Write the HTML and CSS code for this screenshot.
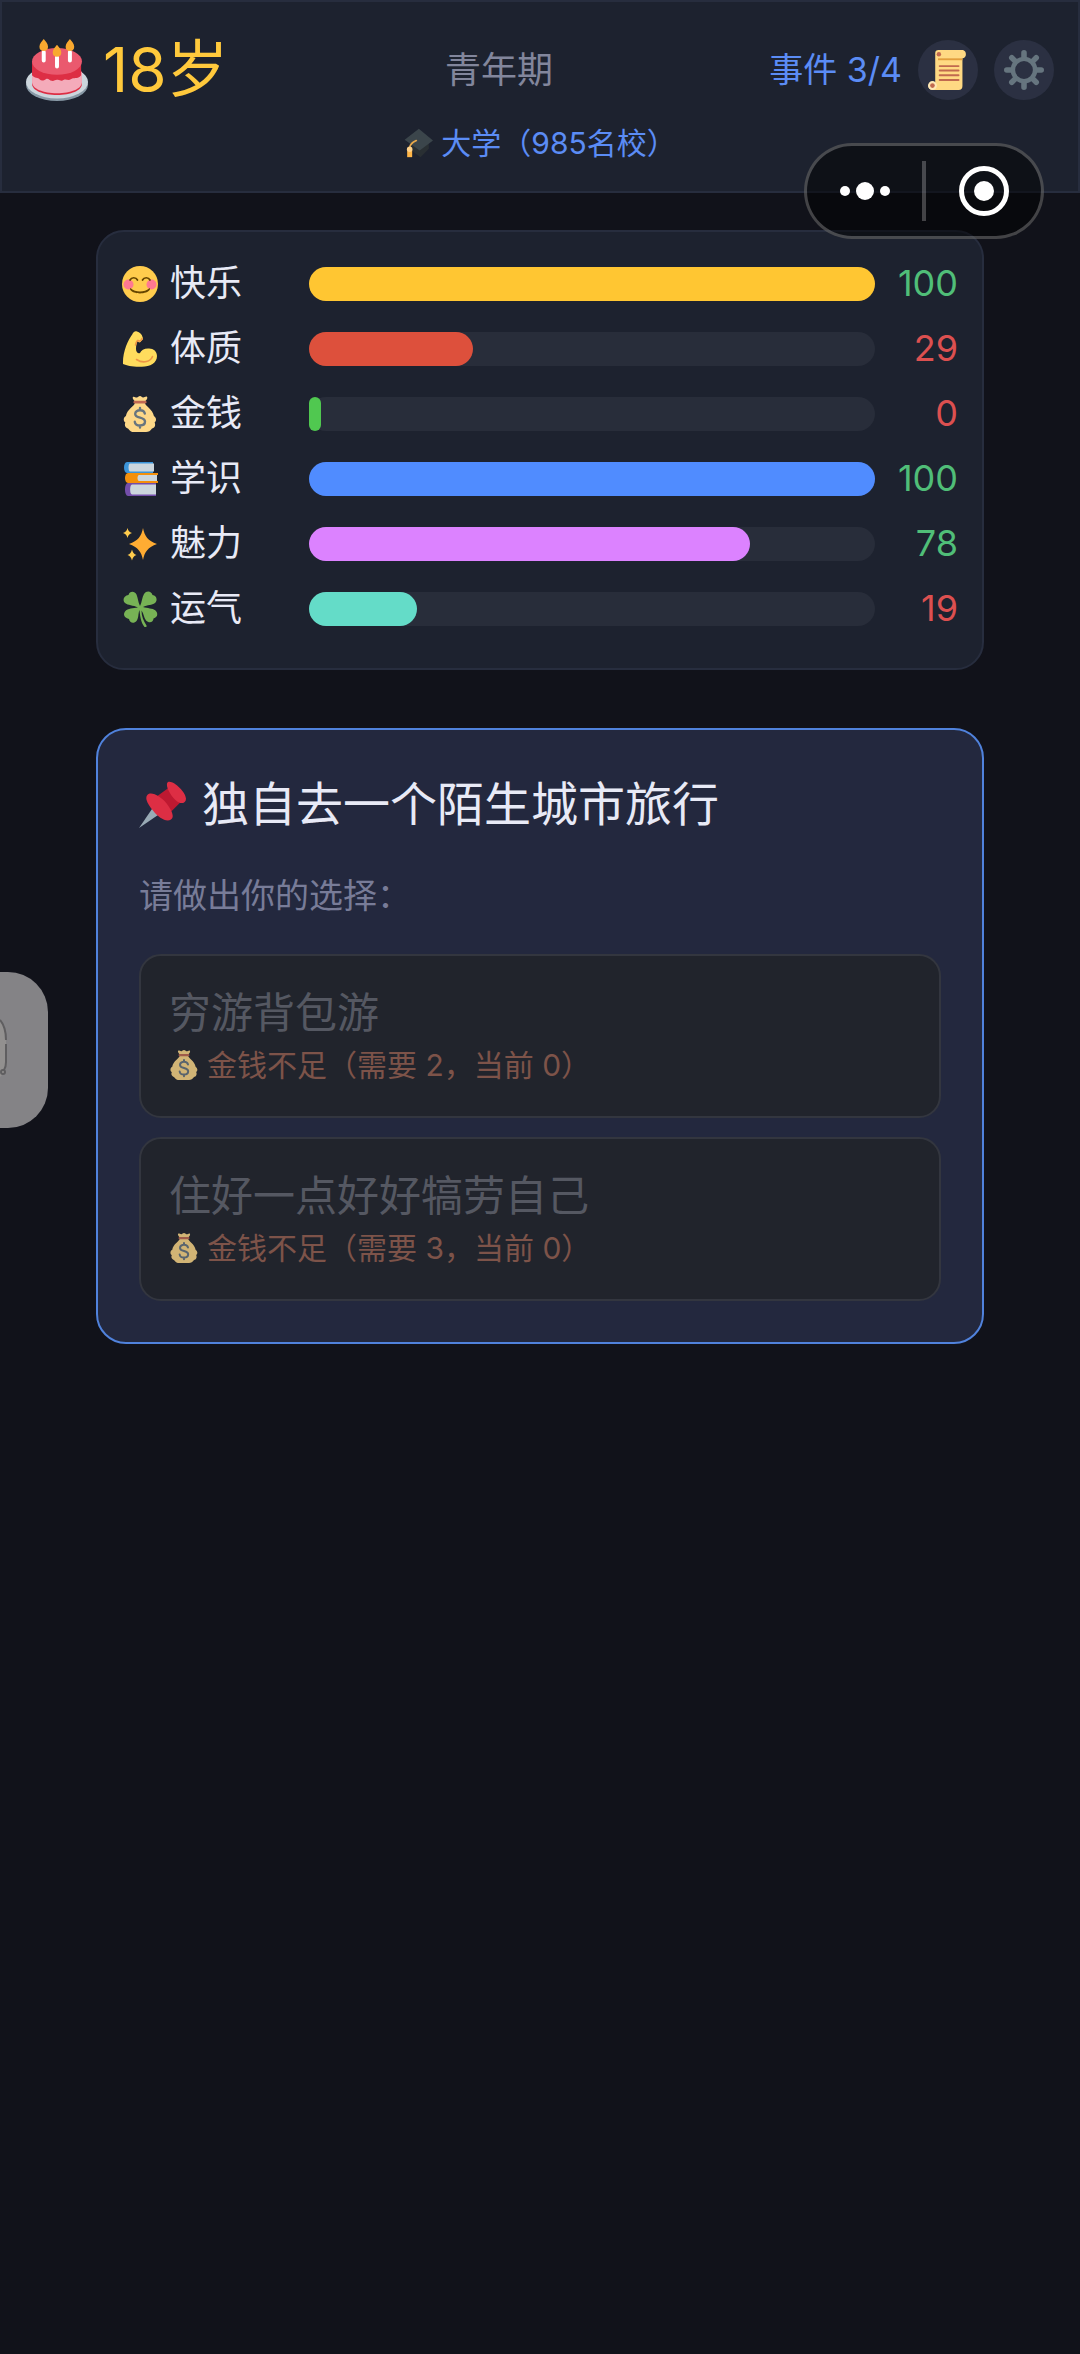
FILE: index.html
```
<!DOCTYPE html>
<html lang="zh-CN">
<head>
<meta charset="utf-8">
<meta name="viewport" content="width=device-width, initial-scale=1">
<title>青年期</title>
<link rel="stylesheet" href="styles.css">
</head>
<body>
<svg class="defs" aria-hidden="true">
  <symbol id="money" viewBox="0 0 36 36">
    <path fill="#fdd888" d="M31.9 20c-1-6.500-9-10.500-9-13h-10c0 2.500-8 6.500-9 13-3 1.500-2.500 5.500-.5 6.500-1.500 3 .5 5.500 2.600 5.900C8 35.500 10 36 12 36h12c2.500 0 4.500-1 6-3.500 2.500-.5 4-3 2.600-6 2.200-1.500 1.800-5-.7-6.500z"/>
    <path fill="#fdd888" d="M14.600 6h7c1.500 0 4.500-3.500 3.500-5-1-1.300-2.600.6-4 .5-1.200-.1-1.700-1.500-3.100-1.500s-2 1.400-3.200 1.500C13.400 1.600 12 0 11 1c-1.200 1.200 1.700 5 3.600 5z"/>
    <rect x="11.500" y="4.800" width="13" height="2.700" rx="1.200" fill="#bf6952"/>
    <path fill="none" stroke="#67757f" stroke-width="2.400" stroke-linecap="round" d="M22.800 17.500c-.5-2.300-2.500-3.300-4.800-3.300-2.600 0-4.800 1.300-4.800 3.700 0 5 9.800 2.500 9.800 7.600 0 2.600-2.200 4-5 4-2.700 0-4.900-1.300-5.200-3.700M18 12v2M18 29.500v2"/>
  </symbol>
</svg>

<header class="topbar">
  <div class="topbar-row">
    <div class="age">
      <svg class="age-icon" viewBox="0 0 36 36" aria-hidden="true">
        <ellipse cx="18" cy="26.500" rx="18" ry="9.500" fill="#8899a6"/>
        <ellipse cx="18" cy="25" rx="18" ry="9.500" fill="#ccd6dd"/>
        <path fill="#dd2e44" d="M3.500 19v7c0 4 6.500 6.500 14.500 6.500S32.500 30 32.500 26v-7z"/>
        <path fill="#f4abba" d="M3.500 19v6c0 4 6.500 6.500 14.500 6.500S32.500 29 32.500 25v-6z"/>
        <path fill="#dd2e44" d="M3.500 13v8c1.500 2 3.500 1 4.500 2.500 1 1 2.500.5 3.500-.2 1.500-.8 2 .8 3.500 1 1.500.2 2-.9 3.500-.6 1.500.3 2 .9 3.500 0 1.200-.8 2.500.7 4-.3 1.500-1.500 4 .3 6-2.400V13z"/>
        <ellipse cx="18" cy="13" rx="14.500" ry="7.800" fill="#ea596e"/>
        <path stroke="#fff" stroke-width="2.300" stroke-linecap="round" d="M10.300 7.500v5M18 10.500v5.500M25.500 7.500v5"/>
        <path fill="#f9a82f" d="M10.300 0c1 1.300 2.500 2.800 2.500 4.500S11.700 7 10.300 7 7.800 6.200 7.800 4.500 9.300 1.300 10.300 0zM18 3.300c1 1.300 2.500 2.800 2.500 4.500s-1.100 2.500-2.500 2.500-2.500-.8-2.500-2.500S17 4.600 18 3.300zM25.500 0c1 1.300 2.500 2.800 2.500 4.500S26.900 7 25.500 7 23 6.200 23 4.500 24.500 1.300 25.500 0z"/>
      </svg>
      <span>18岁</span>
    </div>
    <div class="stage">青年期</div>
    <div class="tools">
      <span class="progress">事件 3/4</span>
      <button class="round" type="button" aria-label="人生记录">
        <svg viewBox="0 0 36 36" aria-hidden="true">
          <path fill="#ffd983" d="M9.500 0h22a4 4 0 0 1 0 7.500H31V32.500a3.500 3.500 0 0 1-3.500 3.500H4a3.700 3.700 0 1 1 2.500-6.500V3A3 3 0 0 1 9.500 0z"/>
          <path fill="#e39f3d" d="M9 7.500h22v1.700H9z"/>
          <circle cx="9.800" cy="3.800" r="2" fill="#c1694f"/>
          <circle cx="4" cy="32" r="4" fill="#ffe8b6"/>
          <circle cx="4" cy="32" r="2.100" fill="#c1694f"/>
          <path stroke="#c1694f" stroke-width="1.700" stroke-linecap="round" d="M10.500 14.500h17M10.500 18.500h17M10.500 22.700h17M10.500 27h17"/>
        </svg>
      </button>
      <button class="round" type="button" aria-label="设置">
        <svg viewBox="0 0 36 36" aria-hidden="true">
          <circle cx="18" cy="18" r="10" fill="none" stroke="#66757f" stroke-width="4"/>
          <path stroke="#66757f" stroke-width="5" stroke-linecap="round" d="M18 2.500v4M18 29.500v4M2.500 18h4M29.500 18h4M7 7l2.800 2.800M26.200 26.200L29 29M7 29l2.800-2.800M26.200 9.800L29 7"/>
        </svg>
      </button>
    </div>
  </div>
  <div class="school">
    <svg class="school-icon" viewBox="0 0 36 36" aria-hidden="true">
      <path fill="#292f33" d="M10 17v10l11 8 10-10V14z"/>
      <path fill="#3b454b" d="M19 1L36 15 20 27 2 14z"/>
      <path fill="none" stroke="#e8a84a" stroke-width="2" stroke-linecap="round" d="M16 15c-4 2-8 4-8 9"/>
      <path fill="#ffb648" d="M5 26h6v9H5z"/>
      <circle cx="8" cy="25.500" r="3.300" fill="#fdd08a"/>
    </svg>
    <span>大学（985名校）</span>
  </div>
</header>

<nav class="capsule" aria-label="小程序">
  <button type="button" aria-label="更多">
    <svg width="50" height="18" viewBox="0 0 50 18" fill="#fff" aria-hidden="true"><circle cx="5" cy="9" r="5"/><circle cx="25" cy="9" r="9"/><circle cx="45" cy="9" r="5"/></svg>
  </button>
  <button type="button" aria-label="关闭">
    <svg width="50" height="50" viewBox="0 0 50 50" aria-hidden="true"><circle cx="25" cy="25" r="22.500" fill="none" stroke="#fff" stroke-width="5"/><circle cx="25" cy="25" r="10" fill="#fff"/></svg>
  </button>
</nav>

<main class="content">
  <section class="stats">
    <div class="stat">
      <svg class="stat-icon" viewBox="0 0 36 36" aria-hidden="true">
        <circle cx="18" cy="18" r="18" fill="#ffcc4d"/>
        <circle cx="6.500" cy="18.500" r="5" fill="#ff7892"/><circle cx="29.500" cy="18.500" r="5" fill="#ff7892"/>
        <path fill="none" stroke="#664500" stroke-width="1.700" stroke-linecap="round" d="M8 14c1.500-3 6-3 7.500 0M20.500 14c1.500-3 6-3 7.500 0"/>
        <path fill="#664500" d="M9 22.500c4 4 14 4 18 0 .8-.5 1.300.2.900 1-3 5.200-16.800 5.200-19.800 0-.4-.8.100-1.500.9-1z"/>
      </svg>
      <span class="stat-name">快乐</span>
      <div class="bar"><div class="fill happy" style="width:100%"></div></div>
      <span class="value good">100</span>
    </div>
    <div class="stat">
      <svg class="stat-icon" viewBox="0 0 36 36" aria-hidden="true">
        <path fill="#ffdc5d" d="M15 .5c-2-1-4 .8-4.500 2.500C6 9 .5 21 1 33c4 1.500 9 3 18 2.800C28 36 35 32 35 25c0-5-4-8-9-7.500-4 0-7 2-8 4.500-2 1-4-1-4-4 0-3 .5-6 1.500-8 1 2 3 2 4-.5 1.500-.5 1.800-2 1-3.500C20 3 17.500 1.500 15 .5z"/>
        <path fill="none" stroke="#ef9645" stroke-width="1.600" stroke-linecap="round" d="M14.500 28.500c7 4.500 14 2 16-3M13.500 14c.3-2 1-3.500 2-4.500M16 9.500c1.500 1 3.500.5 4-2"/>
      </svg>
      <span class="stat-name">体质</span>
      <div class="bar"><div class="fill health" style="width:29%"></div></div>
      <span class="value low">29</span>
    </div>
    <div class="stat">
      <svg class="stat-icon" aria-hidden="true"><use href="#money"/></svg>
      <span class="stat-name">金钱</span>
      <div class="bar"><div class="fill wealth" style="width:0%"></div></div>
      <span class="value low">0</span>
    </div>
    <div class="stat">
      <svg class="stat-icon" viewBox="0 0 36 36" aria-hidden="true">
        <path fill="#3b94d9" d="M5 1h26v11H5C1 12 1 1 5 1z"/><path fill="#ccd6dd" d="M8 2.500h24v8H8c-2 0-2-8 0-8z"/>
        <path fill="#f4900c" d="M6 12h30v2H20v6h16v2H6c-4 0-4-10 0-10z"/><path fill="#ccd6dd" d="M17 14h18v6H17c-2 0-2-6 0-6z"/>
        <path fill="#744eaa" d="M6 22h28v13H6c-4 0-4-13 0-13z"/><path fill="#ccd6dd" d="M10 23.500h24v10H10c-2.500 0-2.500-10 0-10z"/>
      </svg>
      <span class="stat-name">学识</span>
      <div class="bar"><div class="fill wisdom" style="width:100%"></div></div>
      <span class="value good">100</span>
    </div>
    <div class="stat">
      <svg class="stat-icon" viewBox="0 0 36 36" aria-hidden="true">
        <path fill="#ffac33" d="M21 2c1.500 8 5 13 14 16-9 3-12.500 8-14 16-1.500-8-5-13-14-16 9-3 12.500-8 14-16z"/>
        <path fill="#ffcc4d" d="M5.500 2c.8 3 1.800 4 4.500 5-2.700 1-3.700 2-4.500 5C4.700 9 3.700 8 1 7c2.700-1 3.700-2 4.500-5zM10 23.500c.8 3 1.800 4.500 4.500 5.500-2.700 1-3.700 2.500-4.500 5.500-.8-3-1.800-4.500-4.500-5.500 2.700-1 3.700-2.500 4.500-5.500z"/>
      </svg>
      <span class="stat-name">魅力</span>
      <div class="bar"><div class="fill charm" style="width:78%"></div></div>
      <span class="value good">78</span>
    </div>
    <div class="stat">
      <svg class="stat-icon" viewBox="0 0 36 36" aria-hidden="true">
        <path fill="#77b255" d="M18 15C16 11 16 7 14.500 3.500 12.500-.5 7.500 0 6.500 4 2 4.500 0 9 3 12c3 2.500 8 2 13 4.500-5 1-10 .5-13 4-2.500 3.500 0 7 4 7.500.5 4 5 5 7.500 2 2.500-3.500 1.500-7.500 3-11 .5 5 1 12 5 17 1 .8 2.700-.3 2-1.500-3-4.500-5-9-5-15 2.500 3 2 7 4.500 10 3 3 7.500 2 7.500-2 4-1 5-5 2-8-3-2.500-8-2-12.500-3.500 4.500-2.500 9-1.500 12-4 3-3 1.500-7.500-2.500-8C29.500 0 24.500-1 22 3c-2 3.500-2 8-4 12z"/>
      </svg>
      <span class="stat-name">运气</span>
      <div class="bar"><div class="fill luck" style="width:19%"></div></div>
      <span class="value low">19</span>
    </div>
  </section>

  <section class="event">
    <h1 class="event-title">
      <svg viewBox="0 0 36 36" aria-hidden="true">
        <path fill="#99aab5" d="M0 36L11 20l5 5z"/>
        <path fill="#be1931" d="M12 13L23 5l9 11-9 9z"/>
        <path fill="#dd2e44" d="M6.500 10.500C9.500 7.500 17 12 21 17c4 5 6.500 10.500 3.500 12.500-3.500 2.500-9.500-1.500-13.500-6.500s-7-9.500-4.500-12.500zM22 1c3.500-2.500 14 7.500 14 12.500 0 3.500-4 4.500-7 2-4-3-9.500-12-7-14.500z"/>
      </svg>
      <span>独自去一个陌生城市旅行</span>
    </h1>
    <p class="prompt">请做出你的选择：</p>
    <div class="options">
      <button class="option" type="button" disabled>
        <span class="option-name">穷游背包游</span>
        <span class="option-note"><svg aria-hidden="true"><use href="#money"/></svg>金钱不足（需要 2，当前 0）</span>
      </button>
      <button class="option" type="button" disabled>
        <span class="option-name">住好一点好好犒劳自己</span>
        <span class="option-note"><svg aria-hidden="true"><use href="#money"/></svg>金钱不足（需要 3，当前 0）</span>
      </button>
    </div>
  </section>
</main>

<button class="side-tab" type="button" aria-label="侧边栏">
  <svg width="8" height="64" viewBox="0 0 8 64" fill="none" aria-hidden="true">
    <path fill="#92908f" d="M0 3q6 5 6 19v22q0 8-2 11l-4 4z"/>
    <path stroke="#5f5e60" stroke-width="2" d="M0 2q6 7 6 20M6 26v18q0 5-2 8"/>
    <circle cx="3" cy="54" r="2" stroke="#5f5e60" stroke-width="2"/>
  </svg>
</button>
</body>
</html>
```
FILE: styles.css
```
* { box-sizing: border-box; }

body {
  margin: 0;
  min-height: 100vh;
  position: relative;
  background: #11121a;
  color: #e8eaf6;
  font-family: Inter, "Noto Sans CJK SC", sans-serif;
}

button {
  font: inherit;
  color: inherit;
  border: 0;
  padding: 0;
  background: none;
}

svg { display: block; flex: none; }

.defs { position: absolute; width: 0; height: 0; }

.topbar {
  background: #1d222f;
  border: 2px solid #272d3e;
  padding: 38px 24px 27px;
}

.topbar-row {
  display: flex;
  align-items: center;
  justify-content: space-between;
  height: 60px;
}

.age {
  display: flex;
  align-items: center;
  gap: 15px;
  font-size: 62px;
  line-height: 60px;
  color: #ffc93c;
}

.age-icon { width: 62px; height: 62px; }

.stage { font-size: 36px; line-height: 60px; color: #82869c; }

.tools { display: flex; align-items: center; gap: 16px; }

.progress { font-size: 34px; line-height: 60px; color: #5b8cf5; }

.round {
  width: 60px;
  height: 60px;
  border-radius: 50%;
  background: #2b3042;
  display: grid;
  place-items: center;
}

.round svg { width: 40px; height: 40px; }

.school {
  display: flex;
  align-items: center;
  justify-content: center;
  gap: 8px;
  margin-top: 22px;
  font-size: 30px;
  line-height: 42px;
  color: #5b8cf5;
}

.school-icon { width: 30px; height: 30px; }

.capsule {
  position: absolute;
  top: 143px;
  right: 36px;
  width: 240px;
  height: 96px;
  border: 3px solid rgba(255, 255, 255, .24);
  border-radius: 48px;
  background: rgba(0, 0, 0, .5);
  display: flex;
  align-items: center;
}

.capsule button {
  flex: 1;
  height: 60px;
  display: grid;
  place-items: center;
}

.capsule button + button { border-left: 4px solid rgba(255, 255, 255, .24); }

.content {
  padding: 37px 96px;
  display: flex;
  flex-direction: column;
  gap: 58px;
}

.stats {
  background: #1d222f;
  border: 2px solid #272d3e;
  border-radius: 28px;
  padding: 27px 24px 35px;
  display: flex;
  flex-direction: column;
  gap: 16px;
}

.stat {
  display: flex;
  align-items: center;
  height: 49px;
  font-size: 36px;
  line-height: 49px;
}

.stat-icon { width: 36px; height: 36px; margin-right: 12px; }

.stat-name { width: 139px; }

.bar {
  flex: 1;
  height: 34px;
  border-radius: 17px;
  background: #282d3a;
}

.fill { height: 100%; min-width: 12px; border-radius: 17px; }
.happy { background: #ffc632; }
.health { background: #dd503c; }
.wealth { background: #50c850; }
.wisdom { background: #508cff; }
.charm { background: #dc82ff; }
.luck { background: #64dcc8; }

.value { width: 83px; text-align: right; }
.good { color: #50be78; }
.low { color: #dc5050; }

.event {
  background: #23283e;
  border: 2px solid #5082dc;
  border-radius: 30px;
  padding: 41px;
}

.event-title {
  display: flex;
  align-items: center;
  gap: 16px;
  margin: 0;
  font-size: 47px;
  font-weight: 400;
  line-height: 66px;
}

.event-title svg { width: 47px; height: 47px; }

.prompt {
  margin: 35px 0;
  font-size: 34px;
  line-height: 47px;
  color: #787c98;
}

.options { display: flex; flex-direction: column; gap: 19px; }

.option {
  border: 2px solid #33363f;
  border-radius: 22px;
  background: #21242c;
  padding: 28px;
  text-align: left;
}

.option-name {
  display: block;
  font-size: 42px;
  line-height: 58px;
  color: #555862;
}

.option-note {
  display: flex;
  align-items: center;
  gap: 8px;
  font-size: 30px;
  line-height: 46px;
  color: #7d5349;
}

.option-note svg { width: 30px; height: 30px; opacity: .8; }

.side-tab {
  position: absolute;
  left: 0;
  top: 972px;
  width: 48px;
  height: 156px;
  border-radius: 0 40px 40px 0;
  background: #848386;
  display: flex;
  align-items: center;
}
```
